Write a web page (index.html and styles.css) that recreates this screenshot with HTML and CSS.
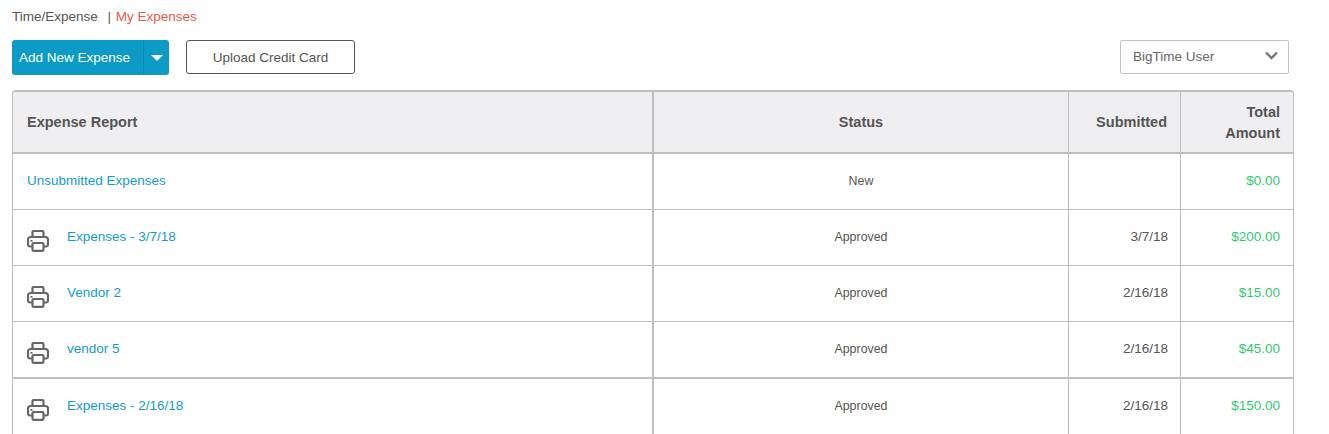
FILE: index.html
```html
<!DOCTYPE html>
<html lang="en">
<head>
    <meta charset="UTF-8">
    <title>My Expenses</title>
    <link rel="stylesheet" href="styles.css">
</head>
<body>
<svg class="sprite" width="0" height="0">
    <symbol id="printer" viewBox="0 0 22 22">
        <path d="M5.500 7V2.500a1.500 1.500 0 0 1 1.500-1.500h8a1.500 1.500 0 0 1 1.500 1.500V7" fill="none" stroke="currentColor" stroke-width="2.200"/>
        <path d="M5 16.500H3a2 2 0 0 1-2-2V9.500a2.500 2.500 0 0 1 2.500-2.500h15a2.500 2.500 0 0 1 2.500 2.500v5a2 2 0 0 1-2 2h-2" fill="none" stroke="currentColor" stroke-width="2.200"/>
        <rect x="5.500" y="13" width="11" height="7.800" rx="1" fill="none" stroke="currentColor" stroke-width="2.200"/>
        <rect x="3.500" y="10" width="2" height="1.800" fill="currentColor"/>
    </symbol>
</svg>
<div class="page">
    <div class="crumbs">Time/Expense <span class="sep">|</span> <span class="current">My Expenses</span></div>
    <div class="toolbar">
        <div class="split">
            <span class="split-label">Add New Expense</span>
            <span class="split-arrow"><i class="caret"></i></span>
        </div>
        <a class="btn-outline">Upload Credit Card</a>
        <div class="select">
            <span>BigTime User</span>
            <svg class="chevron" width="13" height="9" viewBox="0 0 13 9"><path d="M1 1.500l5.500 5.500 5.500-5.500" fill="none" stroke="#777" stroke-width="2.400"/></svg>
        </div>
    </div>
    <table class="expenses">
        <colgroup>
            <col class="c-report">
            <col class="c-status">
            <col class="c-date">
            <col class="c-total">
        </colgroup>
        <thead>
            <tr>
                <th class="report">Expense Report</th>
                <th class="status">Status</th>
                <th class="date">Submitted</th>
                <th class="total">Total<br>Amount</th>
            </tr>
        </thead>
        <tbody>
            <tr class="first">
                <td class="report"><a>Unsubmitted Expenses</a></td>
                <td class="status">New</td>
                <td class="date"></td>
                <td class="total">$0.00</td>
            </tr>
            <tr>
                <td class="report"><svg class="print"><use href="#printer"/></svg><a>Expenses - 3/7/18</a></td>
                <td class="status">Approved</td>
                <td class="date">3/7/18</td>
                <td class="total">$200.00</td>
            </tr>
            <tr>
                <td class="report"><svg class="print"><use href="#printer"/></svg><a>Vendor 2</a></td>
                <td class="status">Approved</td>
                <td class="date">2/16/18</td>
                <td class="total">$15.00</td>
            </tr>
            <tr class="group-end">
                <td class="report"><svg class="print"><use href="#printer"/></svg><a>vendor 5</a></td>
                <td class="status">Approved</td>
                <td class="date">2/16/18</td>
                <td class="total">$45.00</td>
            </tr>
            <tr>
                <td class="report"><svg class="print"><use href="#printer"/></svg><a>Expenses - 2/16/18</a></td>
                <td class="status">Approved</td>
                <td class="date">2/16/18</td>
                <td class="total">$150.00</td>
            </tr>
        </tbody>
    </table>
</div>
</body>
</html>
```

FILE: styles.css
```css
html, body {
    margin: 0;
    padding: 0;
    height: 434px;
    overflow: hidden;
}

body {
    background: #fff;
    color: #555;
    font: 13.5px/20px "Liberation Sans", Arial, sans-serif;
}

.sprite {
    display: block;
    height: 0;
}

.page {
    padding: 7px 35px 0 12px;
}

.crumbs {
    height: 20px;
    color: #555;
}

.crumbs .sep {
    margin: 0 1px 0 6px;
}

.crumbs .current {
    color: #e8594f;
}

.toolbar {
    display: flex;
    align-items: flex-start;
    margin-top: 13px;
    padding-right: 5px;
}

.split {
    display: flex;
    height: 35px;
    width: 157px;
    background: #0c9bc6;
    border-radius: 3px;
    color: #fff;
    line-height: 35px;
}

.split-label {
    width: 131px;
    padding-left: 7px;
    box-sizing: border-box;
}

.split-arrow {
    flex: 1;
    display: flex;
    align-items: center;
    justify-content: center;
    border-left: 1px solid #0a87ad;
}

.caret {
    border-left: 6px solid transparent;
    border-right: 6px solid transparent;
    border-top: 6px solid #fff;
}

.btn-outline {
    width: 169px;
    height: 34px;
    margin-left: 17px;
    box-sizing: border-box;
    border: 1px solid #555;
    border-radius: 3px;
    text-align: center;
    line-height: 33px;
    color: #555;
}

.select {
    display: flex;
    align-items: center;
    justify-content: space-between;
    width: 169px;
    height: 34px;
    margin-left: auto;
    padding: 0 10px 0 12px;
    box-sizing: border-box;
    border: 1px solid #c4c4c4;
    border-radius: 2px;
    color: #666;
}

.chevron {
    margin-bottom: 4px;
}

.expenses {
    width: 1282px;
    margin-top: 15px;
    table-layout: fixed;
    border-collapse: separate;
    border-spacing: 0;
    border: 1px solid #bfbfbf;
    border-top-width: 2px;
    border-bottom: 0;
    border-radius: 4px 4px 0 0;
}

.c-report { width: 641px; }
.c-status { width: 415px; }
.c-date { width: 112px; }
.c-total { width: 112px; }

.expenses th {
    height: 60px;
    padding: 0 13px;
    background: #efeff1;
    border-bottom: 2px solid #bfbfbf;
    border-right: 1px solid #bfbfbf;
    font-size: 14.5px;
    font-weight: bold;
    color: #555;
    line-height: 21px;
}

.expenses th.total {
    height: 58px;
    padding-top: 2px;
}

.expenses th:first-child {
    border-top-left-radius: 3px;
}

.expenses th:last-child {
    border-top-right-radius: 3px;
}

.expenses td {
    height: 53px;
    padding: 0 13px 2px;
    border-bottom: 1px solid #bfbfbf;
    border-right: 1px solid #bfbfbf;
}

.expenses tr > :last-child {
    border-right: 0;
}

.expenses .report {
    text-align: left;
    padding-left: 14px;
    border-right-width: 2px;
}

.expenses .status {
    text-align: center;
    padding-left: 0;
    padding-right: 0;
}

.expenses td.status {
    font-size: 12.4px;
}

.expenses .date,
.expenses .total {
    text-align: right;
}

.expenses td.date {
    padding-right: 12px;
}

.expenses td.total {
    color: #2ecc71;
}

.expenses a {
    color: #149cc9;
}

.expenses td.report .print + a {
    vertical-align: middle;
}

.print {
    width: 22px;
    height: 22px;
    margin-right: 18px;
    color: #666;
    vertical-align: middle;
    position: relative;
    top: 4px;
}

.expenses tr.group-end td {
    border-bottom-width: 2px;
}
```
